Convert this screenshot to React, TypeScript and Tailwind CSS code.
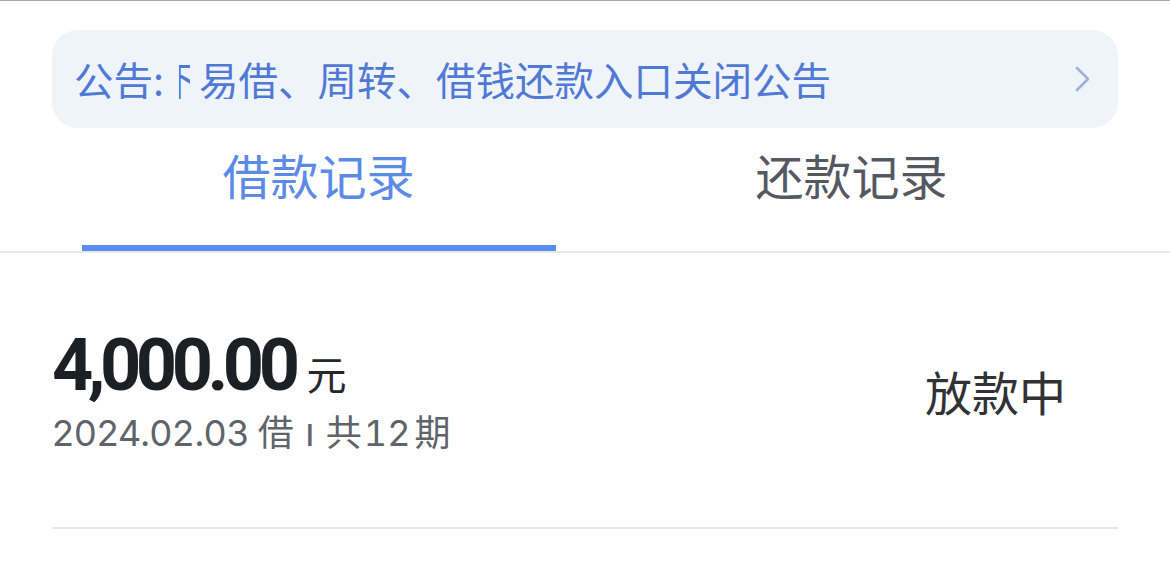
const cjk = "font-['Noto_Sans_CJK_SC',sans-serif]";

const Chevron = () => (
  <svg width="18" height="28" viewBox="0 0 18 28" fill="none">
    <path d="M3 3l11 11L3 25" stroke="#9db0d6" strokeWidth="2.6" strokeLinecap="round" strokeLinejoin="round" />
  </svg>
);

const App = () => {
  return (
    <div className="w-[1170px] h-[588px] overflow-hidden bg-white border-t border-[#a6a6a6]">
      {/* Notice */}
      <div className="mx-[52px] mt-[29px] h-[98px] rounded-[26px] bg-[#eff3fa] flex items-center pl-[22px] pr-[26px]">
        <div className={`${cjk} flex-1 flex items-center whitespace-nowrap overflow-hidden text-[39.5px] leading-none text-[#5079d5]`}>
          <span className="shrink-0">公告:</span>
          {/* scrolling text, first char cut off */}
          <span className="shrink-0 w-[11px] overflow-hidden ml-[15px]">
            <span className="block -ml-[19px]">下</span>
          </span>
          <span className="ml-[9px]">易借、周转、借钱还款入口关闭公告</span>
        </div>
        <Chevron />
      </div>

      {/* Tabs */}
      <div className="border-b-2 border-[#e6e8ec]">
        <div className="mx-[52px] flex">
          <div className="flex-1 h-[123px] flex flex-col items-center justify-between pt-[22px]">
            <span className={`${cjk} text-[48px] leading-none text-[#5b8be6]`}>借款记录</span>
            <div className="w-[474px] h-[6px] bg-[#5b8cf0]"></div>
          </div>
          <div className="flex-1 h-[123px] flex flex-col items-center pt-[22px]">
            <span className={`${cjk} text-[48px] leading-none text-[#55595f]`}>还款记录</span>
          </div>
        </div>
      </div>

      {/* Record */}
      <div className="mx-[52px] h-[276px] border-b-2 border-[#e4e7ee] flex items-center justify-between pr-[52px]">
        <div className="flex flex-col">
          <div className="flex items-baseline">
            <span className="font-['Roboto',sans-serif] font-bold text-[72px] leading-none tracking-[-5.5px] text-[#1c1f24]">
              4,000.00
            </span>
            <span className={`${cjk} text-[40px] leading-none text-[#24272b] ml-[12px]`}>元</span>
          </div>
          <div className="flex items-baseline mt-[10px] text-[36px] leading-none text-[#5f636a]">
            <span className="font-['Inter',sans-serif]">2024.02.03</span>
            <span className={`${cjk} ml-[9px]`}>借</span>
            <span className="font-['Inter',sans-serif] font-medium mx-[12px] text-[30px]">I</span>
            <span className={cjk}>共</span>
            <span className="font-['Inter',sans-serif] tabular-nums ml-[2px] mr-[4px]">12</span>
            <span className={cjk}>期</span>
          </div>
        </div>
        <span className={`${cjk} text-[47px] leading-none text-[#303236]`}>放款中</span>
      </div>
    </div>
  );
};

export default App;
